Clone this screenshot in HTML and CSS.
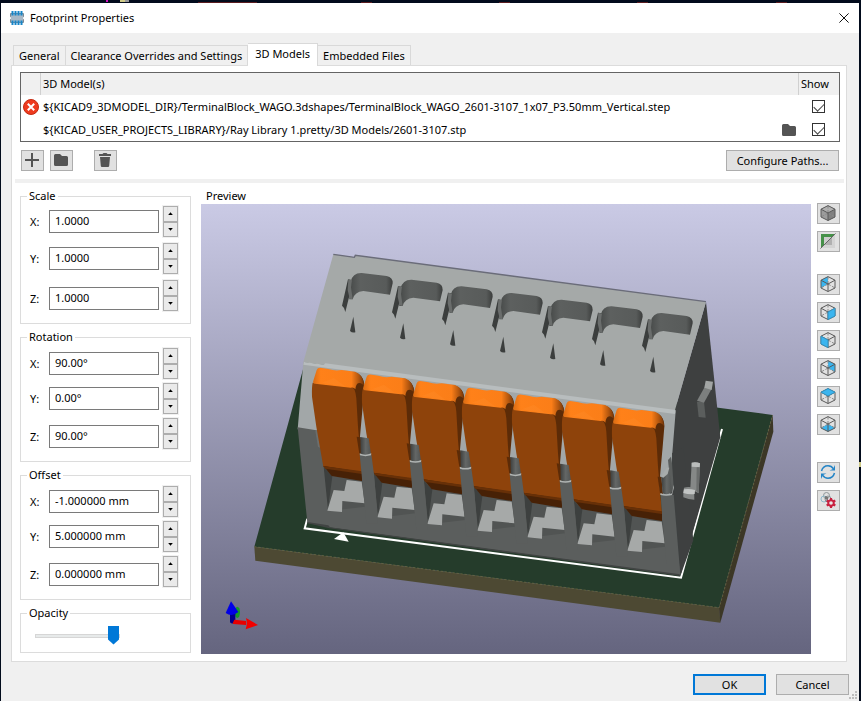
FILE: index.html
```html
<!DOCTYPE html>
<html lang="en">
<head>
<meta charset="utf-8">
<title>Footprint Properties</title>
<link rel="stylesheet" href="styles.css">
</head>
<body>
<svg class="defs" aria-hidden="true">
  <defs>
    <symbol id="i-folder" viewBox="0 0 14 12"><path d="M1.500 0H6l2 2h4.500Q14 2 14 3.500v7Q14 12 12.500 12h-11Q0 12 0 10.500v-9Q0 0 1.500 0z" fill="#545454"/></symbol>
    <symbol id="i-cube" viewBox="0 0 16 16"><g fill="none" stroke-linejoin="round"><path d="M8 8V.8M8 8l7 4M8 8l-7 4" stroke="#8a8a8a" stroke-dasharray="3 1.500"/><path d="M8 .6l7 3.600v7.800l-7 3.500-7-3.500V4.200zM1 4.200L8 8l7-3.800M8 8v7.400" stroke="#5a5a5a"/></g></symbol>
    <linearGradient id="sky" x1="0" y1="0" x2="0" y2="1"><stop offset="0" stop-color="#cacae5"/><stop offset="1" stop-color="#65657f"/></linearGradient>
    <linearGradient id="cap" x1="0" y1="0" x2="1" y2="0"><stop offset="0" stop-color="#d96c14"/><stop offset=".15" stop-color="#ff8119"/><stop offset=".75" stop-color="#fb7e18"/><stop offset=".88" stop-color="#b8590f"/><stop offset="1" stop-color="#6e3409"/></linearGradient>
    <linearGradient id="wall" x1="0" y1="0" x2="1" y2="0"><stop offset="0" stop-color="#464948"/><stop offset=".25" stop-color="#5d605f"/><stop offset=".85" stop-color="#585b5a"/><stop offset="1" stop-color="#3b3d3c"/></linearGradient>
    <linearGradient id="peg" x1="0" y1="0" x2="1" y2="0"><stop offset="0" stop-color="#3d3f3e"/><stop offset=".5" stop-color="#646766"/><stop offset="1" stop-color="#505352"/></linearGradient>
    <g id="slot">
      <path d="M452 125Q458 98 485 99L560 108Q579 112 578 130L570 164L490 153Q464 155 458 178L448 178Z" fill="url(#wall)"/>
      <path d="M444 118L455 120L450 160L436 216L432 204L426 197Z" fill="#3b3e3d"/>
      <path d="M445 118L456 121L453 142L458 178L449 176L443 150Z" fill="#6a6d6c"/>
      <path d="M460 230L466 277Q456 279 450 273Z" fill="#3b3e3d"/>
    </g>
    <g id="lever">
      <path d="M460 396Q493 402 493 440L488 500L479 600L476 640L450 440Z" fill="#5c2b07"/>
      <path d="M338 428L452 441Q466 440 469 475L474 560L486 700L370 680L349 560L336 470Q335 440 338 428Z" fill="#8e430b"/>
      <path d="M350 390Q353 381 366 384L385 387Q405 394 425 390L465 395Q490 403 493 440Q485 426 474 430Q468 433 466 448Q462 441 452 443L345 431Q337 430 340 422Z" fill="url(#cap)"/>
      <path d="M365 428L402 414L438 441Z" fill="#ff902f" opacity=".3"/>
      <path d="M370 678L486 696L486 723L395 708Z" fill="#472106"/>
      <path d="M370 678L486 694L486 702L376 686Z" fill="#673008"/>
    </g>
    <g id="foot">
      <path d="M395 708L490 721L496 800L385 813Z" fill="#515453"/>
      <path d="M371 680L397 709L384 810Z" fill="#3d403f"/>
      <path d="M440 720L485 725L494 790L427 783L426 816L382 812L401 750L433 753Z" fill="#a6a9a8"/>
    </g>
    <g id="post">
      <path d="M470 590L482 592L489 643L478 641Z" fill="#5c2b07"/>
      <path d="M479 643L514 643L522 702L534 850L499 850Z" fill="#5b5e5d"/>
      <path d="M481 591L506 595L513 642Q497 650 482 641Z" fill="url(#peg)"/>
      <path d="M479 640Q495 648 514 640L513 646Q496 651 480 646Z" fill="#b0b4b3"/>
    </g>
  </defs>
</svg>

<div class="window">
  <header class="titlebar">
    <svg class="app-icon" viewBox="0 0 14 14"><path d="M1 2Q0 2 0 3v2.500q1 .5 1 1.500T0 8.500V11q0 1 1 1h12q1 0 1-1V8.500q-1-.5-1-1.500t1-1.500V3q0-1-1-1z" fill="#7d8a94"/><path d="M1 3h12v8H1z" fill="#a8b8c6"/><path d="M2.500 0v4.500M5.500 0v4.500M8.500 0v4.500M11.500 0v4.500M2.500 9.500V14M5.500 9.500V14M8.500 9.500V14M11.500 9.500V14" stroke="#1785c8" stroke-width="2"/></svg>
    <h1>Footprint Properties</h1>
    <button class="close" aria-label="Close"><svg viewBox="0 0 10 10"><path d="M.4 .4l9.200 9.200M9.600 .4L.4 9.600" stroke="#111" fill="none"/></svg></button>
  </header>

  <nav class="tabs" role="tablist">
    <button class="tab" role="tab">General</button>
    <button class="tab" role="tab">Clearance Overrides and Settings</button>
    <button class="tab active" role="tab" aria-selected="true">3D Models</button>
    <button class="tab" role="tab">Embedded Files</button>
  </nav>

  <main class="page">
    <table class="models">
      <thead>
        <tr><th class="status"></th><th class="path">3D Model(s)</th><th class="browse"></th><th class="show">Show</th></tr>
      </thead>
      <tbody>
        <tr>
          <td class="status"><svg class="error" viewBox="0 0 16 16"><circle cx="8" cy="8" r="7.500" fill="#ee3a1e" stroke="#c42a12"/><path d="M4.800 4.800l6.400 6.400M11.200 4.800l-6.400 6.400" stroke="#fff" stroke-width="2"/></svg></td>
          <td class="path">${KICAD9_3DMODEL_DIR}/TerminalBlock_WAGO.3dshapes/TerminalBlock_WAGO_2601-3107_1x07_P3.50mm_Vertical.step</td>
          <td class="browse"></td>
          <td class="show"><input type="checkbox" checked aria-label="Show model 1"></td>
        </tr>
        <tr>
          <td class="status"></td>
          <td class="path">${KICAD_USER_PROJECTS_LIBRARY}/Ray Library 1.pretty/3D Models/2601-3107.stp</td>
          <td class="browse"><svg class="folder" viewBox="0 0 14 12"><use href="#i-folder"/></svg></td>
          <td class="show"><input type="checkbox" checked aria-label="Show model 2"></td>
        </tr>
      </tbody>
    </table>

    <div class="actions">
      <button class="tool" aria-label="Add model"><svg viewBox="0 0 16 16"><path d="M8 1v14M1 8h14" stroke="#545454" stroke-width="2"/></svg></button>
      <button class="tool" aria-label="Browse"><svg class="folder" viewBox="0 0 14 12"><use href="#i-folder"/></svg></button>
      <button class="tool remove" aria-label="Delete model"><svg viewBox="0 0 16 16"><path d="M2 2h3.500l1-1h3l1 1H14v2H2zM3 5h10l-.8 9q-.1 1-1.200 1H5q-1.100 0-1.200-1z" fill="#545454"/></svg></button>
      <button class="push">Configure Paths...</button>
    </div>

    <hr>

    <div class="content">
      <div class="settings">
        <fieldset class="roomy">
          <legend>Scale</legend>
          <div class="field"><label for="sx">X:</label><input id="sx" type="text" value="1.0000"><span class="spin"><button class="up" aria-label="Increase"></button><button class="down" aria-label="Decrease"></button></span></div>
          <div class="field"><label for="sy">Y:</label><input id="sy" type="text" value="1.0000"><span class="spin"><button class="up" aria-label="Increase"></button><button class="down" aria-label="Decrease"></button></span></div>
          <div class="field"><label for="sz">Z:</label><input id="sz" type="text" value="1.0000"><span class="spin"><button class="up" aria-label="Increase"></button><button class="down" aria-label="Decrease"></button></span></div>
        </fieldset>
        <fieldset>
          <legend>Rotation</legend>
          <div class="field"><label for="rx">X:</label><input id="rx" type="text" value="90.00°"><span class="spin"><button class="up" aria-label="Increase"></button><button class="down" aria-label="Decrease"></button></span></div>
          <div class="field"><label for="ry">Y:</label><input id="ry" type="text" value="0.00°"><span class="spin"><button class="up" aria-label="Increase"></button><button class="down" aria-label="Decrease"></button></span></div>
          <div class="field"><label for="rz">Z:</label><input id="rz" type="text" value="90.00°"><span class="spin"><button class="up" aria-label="Increase"></button><button class="down" aria-label="Decrease"></button></span></div>
        </fieldset>
        <fieldset>
          <legend>Offset</legend>
          <div class="field"><label for="ox">X:</label><input id="ox" type="text" value="-1.000000 mm"><span class="spin"><button class="up" aria-label="Increase"></button><button class="down" aria-label="Decrease"></button></span></div>
          <div class="field"><label for="oy">Y:</label><input id="oy" type="text" value="5.000000 mm"><span class="spin"><button class="up" aria-label="Increase"></button><button class="down" aria-label="Decrease"></button></span></div>
          <div class="field"><label for="oz">Z:</label><input id="oz" type="text" value="0.000000 mm"><span class="spin"><button class="up" aria-label="Increase"></button><button class="down" aria-label="Decrease"></button></span></div>
        </fieldset>
        <fieldset class="opacity">
          <legend>Opacity</legend>
          <input type="range" min="0" max="100" value="100" aria-label="Opacity">
        </fieldset>
      </div>

      <section class="preview">
        <h2>Preview</h2>
        <svg class="scene" viewBox="3 -108 1830 1350" preserveAspectRatio="xMidYMid slice" role="img" aria-label="3D preview">
          <rect x="-900" y="-108" width="3600" height="1350" fill="url(#sky)"/>
          <path d="M163 920L325 330L1555 503L1718 525L1557 1103Z" fill="#253c2b"/>
          <path d="M163 920L1558 1103L1561 1148L166 962Z" fill="#4d4933"/>
          <path d="M1718 525L1720 575L1561 1148L1557 1103Z" fill="#3c3726"/>
          <path d="M163 920L1558 1103L1718 525" fill="none" stroke="#6a6a3e" stroke-width="2" stroke-dasharray="7 5"/>
          <path d="M322 836L314 865L1443 1013L1566 567" fill="none" stroke="#fff" stroke-width="6"/>
          <path d="M430 877L402 897L446 905Z" fill="#fff"/>

          <path d="M1424 512L1518 185L1561 592L1441 1005L1400 760Z" fill="#3e4040"/>
          <path d="M400 43L463 52L466 46L1518 185L1424 514L310 367Z" fill="#a5a9a8"/>
          <path d="M400 43L463 52L466 46L1518 185" fill="none" stroke="#6a6c79" stroke-width="4"/>
          <path d="M310 367L1427 514L1417 640L1410 770L293 568Z" fill="#a2a7a8"/>
          <path d="M312 366L372 374L376 370L1427 510L1425 522L310 374Z" fill="#b8bdbe"/>
          <path d="M293 562L358 572L372 680L1385 815L1384 765L1414 765L1441 1005L385 862L322 848Z" fill="#5b5e5d"/>
          <path d="M346 572L360 574L366 626L354 620Z" fill="#6c6f6e"/>
          <path d="M322 846L385 856L390 862L1441 1003L1440 1008L388 865L323 850Z" fill="#414443"/>

          <use href="#slot"/><use href="#slot" x="150" y="20"/><use href="#slot" x="300" y="40"/><use href="#slot" x="450" y="60"/><use href="#slot" x="600" y="80"/><use href="#slot" x="750" y="100"/><use href="#slot" x="900" y="120"/>
          <use href="#foot"/><use href="#foot" x="150" y="20"/><use href="#foot" x="300" y="40"/><use href="#foot" x="450" y="60"/><use href="#foot" x="600" y="80"/><use href="#foot" x="750" y="100"/><use href="#foot" x="900" y="120"/>
          <use href="#lever"/><use href="#lever" x="150" y="20"/><use href="#lever" x="300" y="40"/><use href="#lever" x="450" y="60"/><use href="#lever" x="600" y="80"/><use href="#lever" x="750" y="100"/><use href="#lever" x="900" y="120"/>
          <use href="#post"/><use href="#post" x="150" y="20"/><use href="#post" x="300" y="40"/><use href="#post" x="450" y="60"/><use href="#post" x="600" y="80"/><use href="#post" x="750" y="100"/>

          <path d="M1416 640L1442 1005L1480 900L1450 620Z" fill="#3e4040"/>
          <path d="M1382 765L1421 765L1441 1005L1399 970Z" fill="#5b5e5d"/>
          <path d="M1390 610L1417 600L1410 690L1385 710Z" fill="#a2a7a8"/>
          <path d="M1404 660L1413 650L1416 670L1421 740L1414 760Z" fill="#5b5e5d"/>
          <path d="M1373 710L1384 710L1389 762L1380 760Z" fill="#5c2b07"/>
          <path d="M1384 712L1408 683L1416 755Q1402 767 1388 760Z" fill="url(#peg)"/>
          <path d="M1383 710L1400 683L1408 683L1403 702L1390 713Z" fill="#a8acab"/>
          <path d="M1382 760Q1400 768 1416 760L1421 735L1422 742L1416 765Q1398 770 1382 765Z" fill="#b0b4b3"/>

          <path d="M1491 485L1512 485L1517 533L1496 531Z" fill="#5b5e5d"/>
          <path d="M1491 482L1514 441L1535 446L1512 488Z" fill="#7c7f7e"/>
          <path d="M1517 422L1539 425L1535 450L1513 443Z" fill="#a2a5a4"/>
          <path d="M1475 668Q1487 664 1500 670L1496 760L1487 755L1471 745Z" fill="#858887"/>
          <path d="M1475 668Q1487 664 1500 670L1499 682L1475 680Z" fill="#babdbc"/>
          <path d="M1490 682L1499 682L1496 760L1489 752Z" fill="#6a6d6c"/>
          <path d="M1452 743Q1467 738 1486 745Q1481 762 1483 779Q1465 779 1450 772Q1449 754 1452 743Z" fill="#858887"/>
          <path d="M1452 748Q1468 745 1485 750L1484 762Q1466 764 1450 759Z" fill="#c2c5c4"/>

          <ellipse cx="112" cy="1117" rx="8" ry="17" fill="#149a2a"/>
          <path d="M90 1115h16v32q-9 7-16 0z" fill="#00008c"/>
          <path d="M93 1084L115 1116Q96 1132 77 1119Z" fill="#0000e6"/>
          <path d="M98 1150L103 1139L138 1143L138 1155L100 1152Z" fill="#e60000"/>
          <path d="M138 1134L174 1155L137 1168Q143 1151 138 1134Z" fill="#f00000"/>
        </svg>
      </section>

      <div class="viewbar">
        <button class="tool" aria-label="Orthographic projection"><svg viewBox="0 0 16 16"><path d="M8 .6l7 3.600v7.800l-7 3.500-7-3.500V4.200z" fill="#9c9c9c"/><path d="M8 8l7-3.800v7.800l-7 3.500z" fill="#808080"/><path d="M8 .6l7 3.600-7 3.800-7-3.800z" fill="#b0b0b0"/><use href="#i-cube"/></svg></button>
        <button class="tool" aria-label="Show board body"><svg viewBox="0 0 16 16"><path d="M15 1v14H1z" fill="#d3d3d3"/><path d="M12 4v8H4z" fill="#b4b4b4"/><path d="M1 1h14l-3 3H4v8l-3 3z" fill="#459048"/><path d="M4 4h8l-8 8z" fill="#ccc"/><path d="M4 12l8-8v8z" fill="#b0b0b0"/><path d="M.5 15.500l15-15" stroke="#666"/></svg></button>
        <span class="gap"></span>
        <button class="tool" aria-label="View left"><svg viewBox="0 0 16 16"><path d="M1 4.200L8 .6V8l-7 4z" fill="#3bb5ef"/><use href="#i-cube"/></svg></button>
        <button class="tool" aria-label="View right"><svg viewBox="0 0 16 16"><use href="#i-cube"/><path d="M8 8l7-3.800v7.800l-7 3.500z" fill="#3bb5ef" stroke="#3392c0"/></svg></button>
        <button class="tool" aria-label="View front"><svg viewBox="0 0 16 16"><use href="#i-cube"/><path d="M8 8L1 4.200v7.800l7 3.500z" fill="#3bb5ef" stroke="#3392c0"/></svg></button>
        <button class="tool" aria-label="View back"><svg viewBox="0 0 16 16"><path d="M15 4.200L8 .6V8l7 4z" fill="#3bb5ef"/><use href="#i-cube"/></svg></button>
        <button class="tool" aria-label="View top"><svg viewBox="0 0 16 16"><use href="#i-cube"/><path d="M8 .6l7 3.600L8 8 1 4.200z" fill="#3bb5ef" stroke="#3392c0"/></svg></button>
        <button class="tool" aria-label="View bottom"><svg viewBox="0 0 16 16"><path d="M8 8l7 4-7 3.500L1 12z" fill="#3bb5ef"/><use href="#i-cube"/></svg></button>
        <span class="gap wide"></span>
        <button class="tool" aria-label="Reload board"><svg viewBox="0 0 16 16"><path d="M1.500 7Q3 1.800 8 1.800q3.500 0 5.500 3M14.500 9Q13 14.200 8 14.200q-3.500 0-5.500-3" fill="none" stroke="#2384c6" stroke-width="1.500"/><path d="M15 1v5.500H9.500L13 5zM1 15V9.500h5.500L3 11z" fill="#2384c6"/></svg></button>
        <button class="tool" aria-label="Viewer options"><svg viewBox="0 0 16 16"><g fill="none" stroke="#8e9598"><circle cx="6.500" cy="3.500" r="3"/><circle cx="4" cy="7" r="3" stroke="#8fb9cc"/><circle cx="8" cy="7" r="3"/></g><path d="M5 4l3 1v3l-3-1z" fill="#777"/><circle cx="11" cy="11" r="3.700" fill="#c8203f"/><path d="M11 6v10M6.700 8.500l8.600 5M15.300 8.500l-8.600 5" stroke="#c8203f" stroke-width="2.200"/><circle cx="11" cy="11" r="1.800" fill="#e8e8e8"/></svg></button>
      </div>
    </div>
  </main>

  <footer class="buttons">
    <button class="push ok">OK</button>
    <button class="push">Cancel</button>
    <svg class="grip" viewBox="0 0 8 8"><path d="M6 0h2v2H6zM3 3h2v2H3zM6 3h2v2H6zM0 6h2v2H0zM3 6h2v2H3zM6 6h2v2H6z" fill="#bdbdbd"/></svg>
  </footer>
</div>
</body>
</html>
```
FILE: styles.css
```css
* { box-sizing: border-box; }

body {
  margin: 0;
  min-height: 100vh;
  display: flex;
  padding: 3px 2px 0 1px;
  background:
    linear-gradient(#d010c0, #d010c0) 106px 0 / 2px 2px no-repeat,
    linear-gradient(#cfca86, #cfca86) 120px 0 / 5px 2px no-repeat,
    linear-gradient(#999, #999) 125px 0 / 4px 2px no-repeat,
    linear-gradient(#5a1c20, #5a1c20) 198px 2px / 59px 1px no-repeat,
    linear-gradient(#5a1c20, #5a1c20) 361px 2px / 11px 1px no-repeat,
    linear-gradient(#5a1c20, #5a1c20) 499px 2px / 11px 1px no-repeat,
    linear-gradient(#5a1c20, #5a1c20) 637px 2px / 11px 1px no-repeat,
    linear-gradient(#5a1c20, #5a1c20) 776px 2px / 11px 1px no-repeat,
    linear-gradient(#cfca86, #cfca86) 100% 462px / 2px 5px no-repeat,
    #020b1c;
  font: 11px/16px "Noto Sans", "Open Sans", sans-serif;
  color: #000;
}

button, input { font: inherit; color: inherit; margin: 0; }
button { padding: 0; border-radius: 0; }
svg { display: block; flex: none; }
.defs { position: absolute; width: 0; height: 0; }

.window {
  flex: 1;
  min-width: 0;
  display: flex;
  flex-direction: column;
  background: #f0f0f0;
}

.titlebar {
  display: flex;
  align-items: center;
  height: 30px;
  padding: 0 10px 0 9px;
  background: #fff;
}
.app-icon { width: 14px; height: 14px; }
.titlebar h1 { flex: 1; margin: 0 0 0 6px; font-size: 11px; font-weight: 400; }
.close { border: 0; background: none; padding: 0; }
.close svg { width: 10px; height: 10px; }

.tabs { display: flex; align-items: flex-end; margin: 10px 12px 0; height: 22px; }
.tab {
  height: 20px;
  padding: 0 5px;
  border: 1px solid #d9d9d9;
  border-width: 1px 1px 0 0;
  background: #f0f0f0;
  white-space: nowrap;
}
.tab:first-child { border-left-width: 1px; }
.tab.active {
  height: 23px;
  padding: 0 7px 3px;
  margin-bottom: -1px;
  background: #fff;
  position: relative;
}

.page {
  flex: 1;
  display: flex;
  flex-direction: column;
  margin: 0 12px 0 10px;
  padding: 6px 6px 7px 8px;
  border: 1px solid #dcdcdc;
  background: #fff;
}

.models {
  width: 100%;
  border: 1px solid #646464;
  border-spacing: 0;
  table-layout: fixed;
}
.models th, .models td { height: 23px; padding: 0 0 0 2px; text-align: left; font-weight: 400; white-space: nowrap; }
.models th { height: 22px; background: #f0f0f0; }
.models th.path, .models th.show { border-left: 1px solid #d0d0d0; }
.models .status { width: 19px; }
.models td.path { padding-left: 3px; }
.models .browse { width: 18px; }
.models .show { width: 41px; }
.models td.show { padding-left: 14px; }
.error { width: 16px; height: 16px; }
.folder { width: 14px; height: 12px; }

input[type="checkbox"] {
  appearance: none;
  display: block;
  width: 13px;
  height: 13px;
  border: 1px solid #333;
  background: #fff;
}
input[type="checkbox"]:checked::before {
  content: "";
  display: block;
  width: 9px;
  height: 5px;
  margin: 2px 0 0 1px;
  border: solid #444;
  border-width: 0 0 1px 1px;
  transform: rotate(-45deg);
}

.actions { display: flex; align-items: center; gap: 6px; margin: 8px 0 8px 1px; padding-right: 1px; }
.tool {
  display: flex;
  align-items: center;
  justify-content: center;
  width: 23px;
  height: 21px;
  padding: 0 1px 1px 0;
  border: 1px solid #adadad;
  background: #e1e1e1;
}
.tool svg { width: 16px; height: 16px; }
.tool svg.folder { width: 14px; height: 12px; }
.remove { margin-left: 15px; }
.push {
  height: 21px;
  width: 73px;
  border: 1px solid #adadad;
  background: #e1e1e1;
}
.actions .push { width: 113px; margin-left: auto; }

hr { width: calc(100% + 9px); height: 4px; margin: 0 0 5px -5px; border: 0; background: #f0f0f0; }

.content { flex: 1; display: flex; }
.settings { display: flex; flex-direction: column; gap: 5px; width: 171px; }

fieldset {
  display: flex;
  flex-direction: column;
  gap: 2px;
  min-width: 0;
  margin: 0;
  padding: 2px 11px 5px 9px;
  border: 1px solid #dcdcdc;
}
fieldset.roomy { gap: 4px; padding-top: 1px; }
fieldset.opacity { padding: 5px 11px 7px 14px; }
legend { margin-left: -3px; padding: 0 2px; }
.opacity legend { margin-left: -8px; }

.field { display: flex; align-items: center; height: 33px; }
.field:last-child { height: 39px; }
.field label { width: 19px; }
.field input {
  flex: 1;
  min-width: 0;
  height: 23px;
  padding: 0 5px 2px;
  border: 1px solid #7a7a7a;
  background: #fff;
}
.spin {
  display: flex;
  flex-direction: column;
  align-self: flex-start;
  width: 17px;
  height: 33px;
  margin-left: 3px;
  padding: 1px;
  background: #f0f0f0;
}
.spin button {
  flex: 1;
  display: flex;
  align-items: center;
  justify-content: center;
  border: 1px solid #adadad;
  background: #eaeaea;
}
.spin button::before {
  content: "";
  width: 5px;
  height: 3px;
  background: #000;
  clip-path: polygon(0 100%, 50% 0, 100% 100%);
}
.spin .down::before { clip-path: polygon(0 0, 50% 100%, 100% 0); }

input[type="range"] {
  appearance: none;
  width: 85px;
  height: 19px;
  background: none;
}
input[type="range"]::-webkit-slider-runnable-track {
  height: 4px;
  border: 1px solid #d6d6d6;
  background: #e7eaea;
}
input[type="range"]::-webkit-slider-thumb {
  appearance: none;
  width: 11px;
  height: 19px;
  margin-top: -9px;
  background: #0078d7;
  clip-path: polygon(0 0, 100% 0, 100% 74%, 50% 100%, 0 74%);
}

.preview { flex: 1; display: flex; flex-direction: column; min-width: 0; margin-left: 10px; }
.preview h2 { margin: 0 0 0 5px; font-size: 11px; font-weight: 400; }
.scene { flex: 1; width: 100%; min-height: 0; }

.viewbar { display: flex; flex-direction: column; gap: 7px; margin: 15px 0 0 6px; }
.gap { height: 8px; }
.gap.wide { height: 13px; }

.buttons {
  position: relative;
  display: flex;
  justify-content: flex-end;
  gap: 10px;
  padding: 12px 10px 6px;
}
.ok { border: 2px solid #0078d7; }
.grip { position: absolute; right: 2px; bottom: 2px; width: 8px; height: 8px; }
```
